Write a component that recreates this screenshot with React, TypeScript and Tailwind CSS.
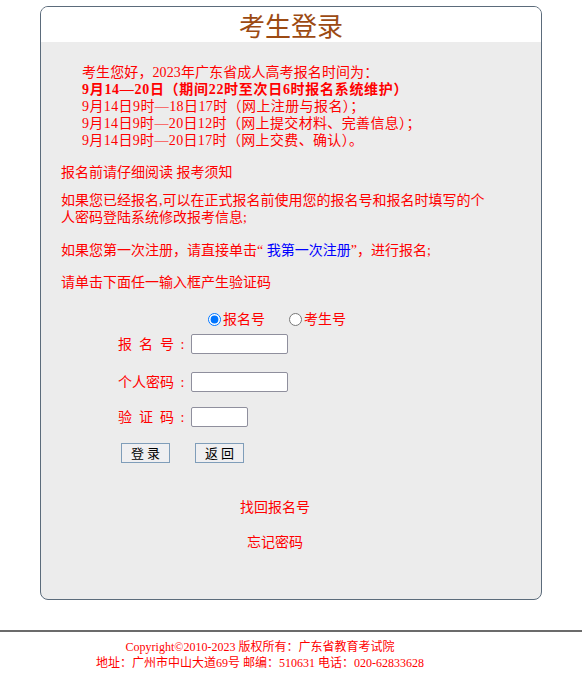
import { useState } from "react";

const SERIF = { fontFamily: '"Liberation Serif", "Noto Sans CJK SC", serif' };
const CJK = { fontFamily: '"Noto Sans CJK SC", "Liberation Serif", sans-serif' };

function Field({ label, wide }: { label: string[]; wide: boolean }) {
  return (
    <div className="flex h-[20px] items-center pl-[77px]">
      <span className="flex w-[56px] justify-between">
        {label.map((c) => (
          <span key={c}>{c}</span>
        ))}
      </span>
      <span className="w-[17px] text-center">:</span>
      <input
        type="text"
        className={`h-[20px] rounded-[2px] border border-[#8f8f9d] bg-white outline-none ${
          wide ? "w-[97px]" : "w-[57px]"
        }`}
      />
    </div>
  );
}

export default function App() {
  const [mode, setMode] = useState("bmh");

  return (
    <div className="min-h-[680px] bg-white text-[14px] text-[#ff0000]" style={SERIF}>
      <div className="mx-auto mt-[6px] h-[594px] w-[502px] overflow-hidden rounded-[8px] border border-[#5b6b7b] bg-[#ececec]">
        <div className="flex h-[35px] items-center justify-center bg-white text-[26px] text-[#9c4a12]" style={CJK}>
          考生登录
        </div>

        <div className="pl-[41px] pt-[22px] leading-[17px]">
          <div className="tracking-[0.1px]">考生您好，2023年广东省成人高考报名时间为：</div>
          <div className="font-bold tracking-[0.7px]">9月14—20日（期间22时至次日6时报名系统维护）</div>
          <div className="tracking-[0.4px]">9月14日9时—18日17时（网上注册与报名）；</div>
          <div className="tracking-[0.35px]">9月14日9时—20日12时（网上提交材料、完善信息）；</div>
          <div className="tracking-[0.35px]">9月14日9时—20日17时（网上交费、确认）。</div>
        </div>

        <div className="pl-[20px] leading-[17px]">
          <p className="mt-[15px]">报名前请仔细阅读 报考须知</p>
          <p className="mt-[11px]">
            如果您已经报名,可以在正式报名前使用您的报名号和报名时填写的个
            <br />
            人密码登陆系统修改报考信息;
          </p>
          <p className="mt-[16px]">
            如果您第一次注册，请直接单击“ <span className="text-[#0000ff]">我第一次注册</span>”，进行报名;
          </p>
          <p className="mt-[15px]">请单击下面任一输入框产生验证码</p>
        </div>

        <div className="mt-[18px] flex h-[20px] items-center pl-[167px]">
          <label className="flex items-center">
            <input
              type="radio"
              name="mode"
              checked={mode === "bmh"}
              onChange={() => setMode("bmh")}
              className="m-0 h-[13px] w-[13px]"
            />
            <span className="ml-[2px]">报名号</span>
          </label>
          <label className="ml-[24px] flex items-center">
            <input
              type="radio"
              name="mode"
              checked={mode === "ksh"}
              onChange={() => setMode("ksh")}
              className="m-0 h-[13px] w-[13px]"
            />
            <span className="ml-[2px]">考生号</span>
          </label>
        </div>

        <div className="mt-[5px]">
          <Field label={["报", "名", "号"]} wide />
        </div>
        <div className="mt-[18px]">
          <Field label={["个", "人", "密", "码"]} wide />
        </div>
        <div className="mt-[15px]">
          <Field label={["验", "证", "码"]} wide={false} />
        </div>

        <div className="mt-[16px] flex gap-[25px] pl-[80px] text-[13px] text-black" style={CJK}>
          <button className="flex h-[20px] w-[49px] items-center justify-center border border-[#7f9db9] bg-[#efeff1]">
            登 录
          </button>
          <button className="flex h-[20px] w-[49px] items-center justify-center border border-[#7f9db9] bg-[#efeff1]">
            返 回
          </button>
        </div>

        <div className="w-[468px] text-center leading-[17px]">
          <div className="mt-[36px]">找回报名号</div>
          <div className="mt-[18px]">忘记密码</div>
        </div>
      </div>

      <div className="mt-[30px] h-[2px] w-full bg-[#6b6b6b]" />

      <div className="mt-[7px] w-[520px] text-center text-[12px] leading-[16px]">
        <div>Copyright©2010-2023 版权所有：广东省教育考试院</div>
        <div>地址：广州市中山大道69号 邮编：510631 电话：020-62833628</div>
      </div>
    </div>
  );
}
